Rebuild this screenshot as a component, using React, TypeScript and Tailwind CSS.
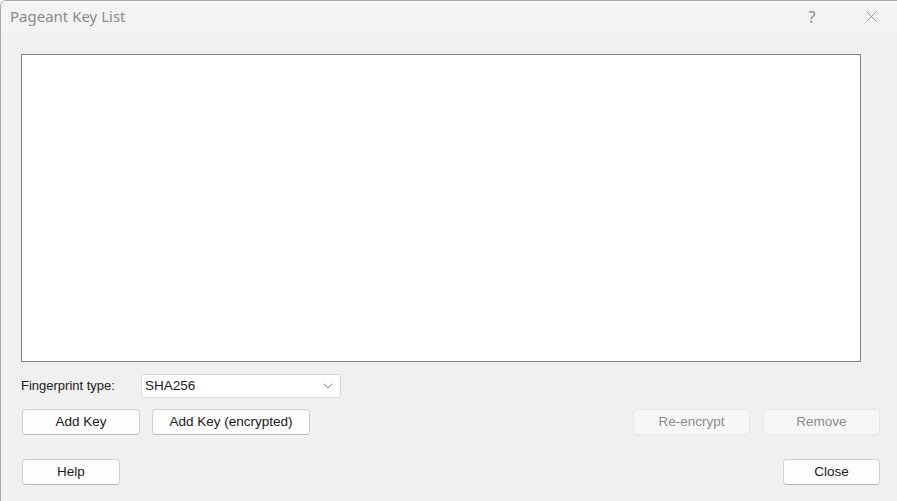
import { ChevronDown, X } from "lucide-react"

const ui = "font-['Liberation_Sans',Arial,sans-serif]"

function Btn({ label, width, disabled }: { label: string; width: string; disabled?: boolean }) {
  return (
    <button
      className={`${width} h-[26px] rounded-[4px] border pt-[1px] text-[13.5px] ${
        disabled
          ? "border-[#e8e8e8] bg-[#f7f7f7] text-[#8c8c8c]"
          : "border-[#d0d0d0] border-b-[#b8b8b8] bg-[#fdfdfd] text-[#1a1a1a]"
      }`}
    >
      {label}
    </button>
  )
}

export default function App() {
  return (
    <div className={`flex h-[501px] w-[897px] flex-col overflow-hidden rounded-tl-[6px] border-l border-t border-[#a9a9a9] bg-[#f0f0f0] ${ui}`}>
      {/* Title bar */}
      <div className="flex h-[31px] shrink-0 items-center bg-[#f3f3f3]">
        <span className="pl-[9px] font-['Noto_Sans',sans-serif] text-[15px] text-[#8a8a8a]">Pageant Key List</span>
        <span className="ml-auto w-[20px] text-center font-['Noto_Sans',sans-serif] text-[16px] text-[#8a8a8a]">?</span>
        <span className="ml-[39px] mr-[16px] flex w-[20px] justify-center">
          <X size={19} strokeWidth={1} className="text-[#7a7a7a]" />
        </span>
      </div>

      {/* Body */}
      <div className="flex flex-1 flex-col pl-[20px] pr-[17px]">
        <div className="mt-[22px] h-[308px] w-[840px] border border-[#7f848c] bg-white" />

        <div className="mt-[12px] flex h-[24px] items-center">
          <span className="w-[120px] text-[13px] text-[#1a1a1a]">Fingerprint type:</span>
          <div className="flex h-[24px] w-[200px] items-center rounded-[3px] border border-[#d9d9d9] bg-white pl-[3px] pr-[4px]">
            <span className="text-[13.5px] text-[#1a1a1a]">SHA256</span>
            <ChevronDown size={16} strokeWidth={1.1} className="ml-auto text-[#555]" />
          </div>
        </div>

        <div className="mt-[11px] flex items-center pl-[1px]">
          <Btn label="Add Key" width="w-[118px]" />
          <div className="ml-[12px]">
            <Btn label="Add Key (encrypted)" width="w-[158px]" />
          </div>
          <div className="ml-auto flex gap-[13px]">
            <Btn label="Re-encrypt" width="w-[117px]" disabled />
            <Btn label="Remove" width="w-[117px]" disabled />
          </div>
        </div>

        <div className="mt-[24px] flex items-center pl-[1px]">
          <Btn label="Help" width="w-[98px]" />
          <div className="ml-auto">
            <Btn label="Close" width="w-[97px]" />
          </div>
        </div>
      </div>
    </div>
  )
}
